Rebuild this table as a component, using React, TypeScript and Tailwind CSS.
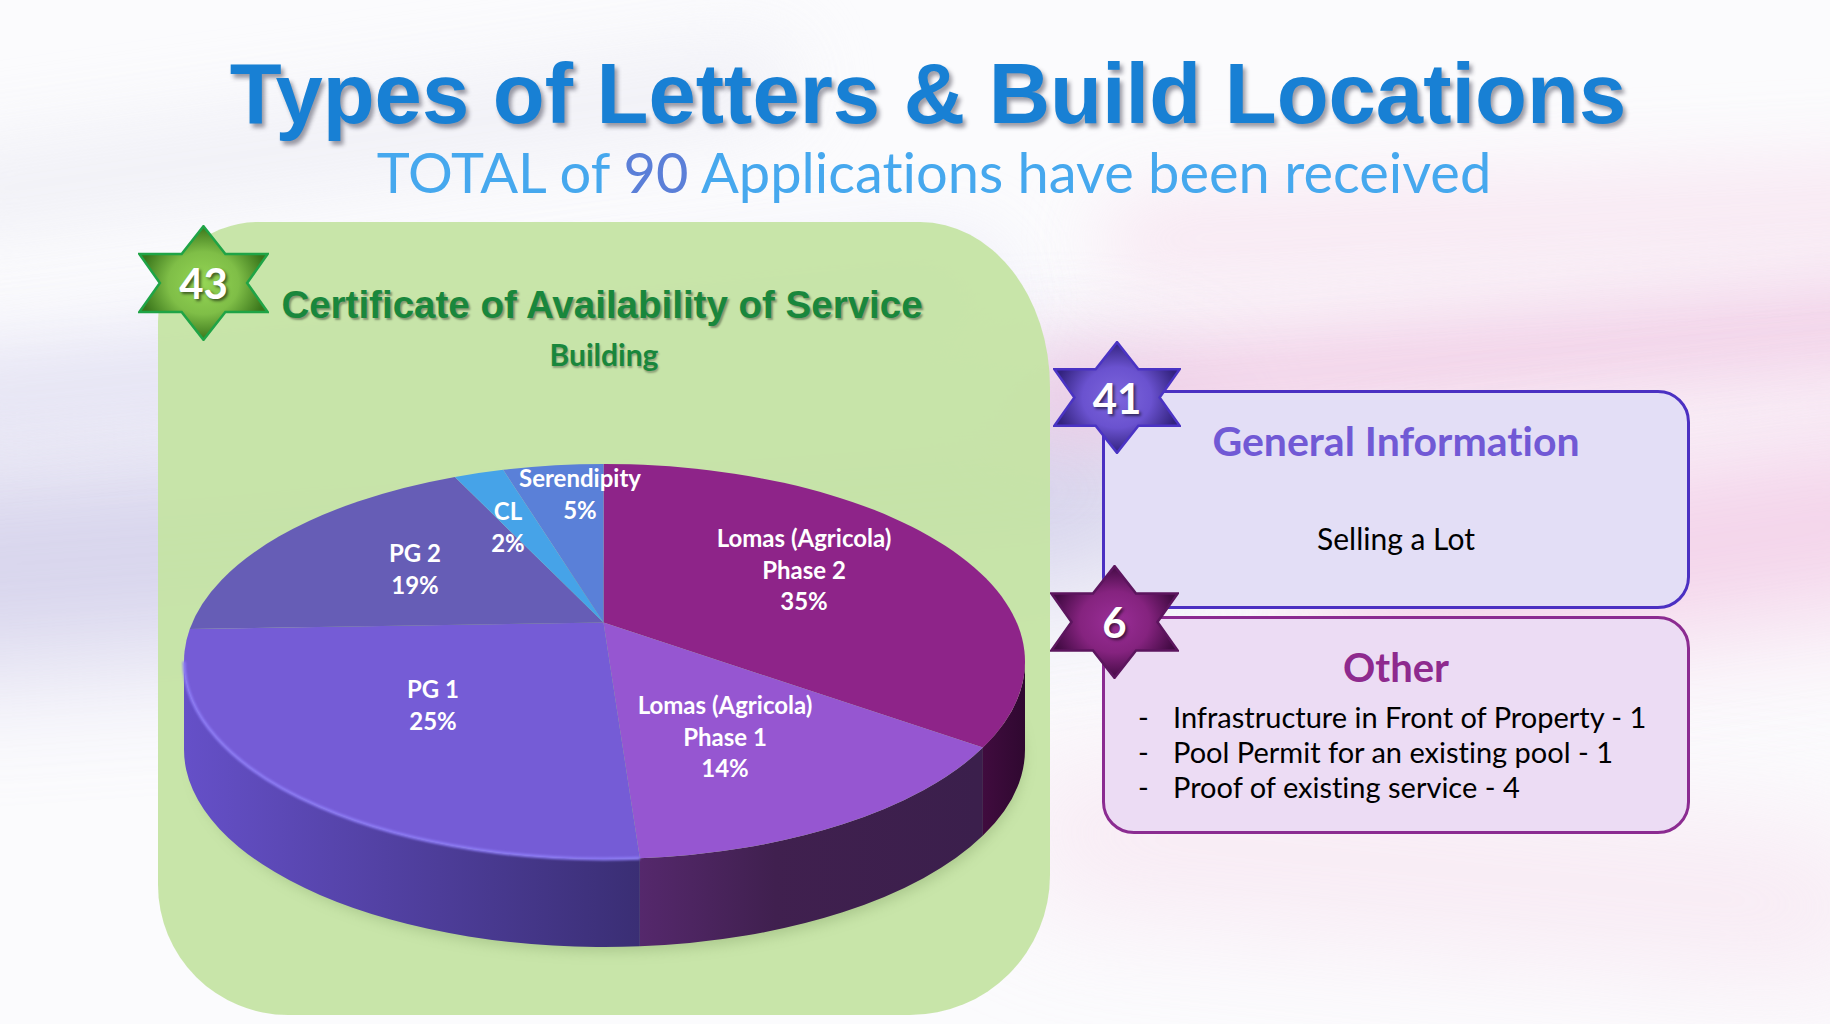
import React from 'react';

// pie geometry, in page pixels (the svg viewBox uses page coordinates)
const cx = 604.5;
const cy = 660.5;
const rx = 420.5;
const ry = 197.5;
const ax = 603.5;
const ay = 621.5;
const depth = 88;

type Pt = { x: number; y: number; t: number };

const at = (t: number): Pt => ({ x: cx + rx * Math.cos(t), y: cy + ry * Math.sin(t), t });

// ray from the apex towards (tx, ty), cut with the top ellipse
const hit = (tx: number, ty: number): Pt => {
  const dx = tx - ax;
  const dy = ty - ay;
  const ox = (ax - cx) / rx;
  const oy = (ay - cy) / ry;
  const ux = dx / rx;
  const uy = dy / ry;
  const a = ux * ux + uy * uy;
  const b = 2 * (ox * ux + oy * uy);
  const c = ox * ox + oy * oy - 1;
  const s = (-b + Math.sqrt(b * b - 4 * a * c)) / (2 * a);
  const x = ax + s * dx;
  const y = ay + s * dy;
  return { x, y, t: Math.atan2((y - cy) / ry, (x - cx) / rx) };
};

const B0 = hit(603.5, 463);
const B1 = hit(978, 745);
const B2 = hit(640, 858);
const B3 = hit(187, 628);
const B4 = hit(455, 476);
const B5 = hit(502, 467);

const slice = (p1: Pt, p2: Pt) =>
  `M ${ax} ${ay} L ${p1.x} ${p1.y} A ${rx} ${ry} 0 0 1 ${p2.x} ${p2.y} Z`;

const side = (t1: number, t2: number) => {
  const p1 = at(t1);
  const p2 = at(t2);
  return `M ${p1.x} ${p1.y} A ${rx} ${ry} 0 0 1 ${p2.x} ${p2.y} L ${p2.x} ${p2.y + depth} A ${rx} ${ry} 0 0 0 ${p1.x} ${p1.y + depth} Z`;
};

const slices = [
  { from: B0, to: B1, fill: '#8e2489' },
  { from: B1, to: B2, fill: '#9656d1' },
  { from: B2, to: B3, fill: '#755cd6' },
  { from: B3, to: B4, fill: '#665db6' },
  { from: B4, to: B5, fill: '#46a3e8' },
  { from: B5, to: B0, fill: '#5a80d8' },
];

const labels = [
  { x: 580, lines: ['Serendipity', '5%'], y: 486 },
  { x: 508, lines: ['CL', '2%'], y: 519 },
  { x: 415, lines: ['PG 2', '19%'], y: 561 },
  { x: 804, lines: ['Lomas (Agricola)', 'Phase 2', '35%'], y: 546 },
  { x: 433, lines: ['PG 1', '25%'], y: 697 },
  { x: 725, lines: ['Lomas (Agricola)', 'Phase 1', '14%'], y: 713 },
];

const otherItems = [
  'Infrastructure in Front of Property - 1',
  'Pool Permit for an existing pool - 1',
  'Proof of existing service - 4',
];

const starPoints = '50,1 66.7,25 99,25 83.3,50 99,75 66.7,75 50,99 33.3,75 1,75 16.7,50 1,25 33.3,25';

type StarProps = {
  id: string;
  label: string;
  inner: string;
  mid: string;
  edge: string;
  stroke: string;
  className: string;
};

const Star = ({ id, label, inner, mid, edge, stroke, className }: StarProps) => (
  <div className={`absolute flex items-center justify-center ${className}`}>
    <svg className="absolute inset-0 h-full w-full" viewBox="0 0 100 100" preserveAspectRatio="none">
      <defs>
        <radialGradient id={id} cx="50%" cy="50%" r="50%">
          <stop offset="0%" stopColor={inner} />
          <stop offset="55%" stopColor={mid} />
          <stop offset="100%" stopColor={edge} />
        </radialGradient>
      </defs>
      <polygon
        points={starPoints}
        fill={`url(#${id})`}
        stroke={stroke}
        strokeWidth="2.5"
        vectorEffect="non-scaling-stroke"
        strokeLinejoin="miter"
      />
    </svg>
    <span className="relative font-['Lato',sans-serif] text-[42px] font-bold leading-none text-white [text-shadow:2px_2px_3px_rgba(0,0,0,0.55)]">
      {label}
    </span>
  </div>
);

const PieChart = () => (
  <svg className="block" width="892" height="560" viewBox="158 420 892 560">
    <defs>
      <linearGradient id="pg1Side" gradientUnits="userSpaceOnUse" x1="184" y1="0" x2="640" y2="0">
        <stop offset="0%" stopColor="#6550c8" />
        <stop offset="100%" stopColor="#3a2e74" />
      </linearGradient>
      <linearGradient id="ph1Side" gradientUnits="userSpaceOnUse" x1="640" y1="0" x2="978" y2="0">
        <stop offset="0%" stopColor="#55286c" />
        <stop offset="40%" stopColor="#40204f" />
        <stop offset="100%" stopColor="#3b1f4c" />
      </linearGradient>
      <linearGradient id="ph2Side" gradientUnits="userSpaceOnUse" x1="978" y1="0" x2="1025" y2="0">
        <stop offset="0%" stopColor="#420c40" />
        <stop offset="100%" stopColor="#2f0830" />
      </linearGradient>
      <filter id="pieShadow" x="-10%" y="-10%" width="120%" height="130%">
        <feGaussianBlur stdDeviation="7" />
      </filter>
      <filter id="soft" x="-5%" y="-5%" width="110%" height="110%">
        <feGaussianBlur stdDeviation="1.2" />
      </filter>
    </defs>

    {/* shadow under the pie */}
    <ellipse cx={cx + 4} cy={cy + depth + 8} rx={rx - 6} ry={ry - 4} fill="#6f8f55" opacity="0.35" filter="url(#pieShadow)" />

    {/* sides */}
    <path d={side(B2.t, Math.PI)} fill="url(#pg1Side)" />
    <path d={side(B1.t, B2.t)} fill="url(#ph1Side)" />
    <path d={side(0, B1.t)} fill="url(#ph2Side)" />

    {/* top */}
    {slices.map((s, i) => (
      <path key={i} d={slice(s.from, s.to)} fill={s.fill} />
    ))}

    {/* light rim on the front edge of PG 1 */}
    <path
      d={`M ${at(Math.PI).x} ${at(Math.PI).y} A ${rx} ${ry} 0 0 0 ${B2.x} ${B2.y}`}
      fill="none"
      stroke="#8d7cf6"
      strokeWidth="3"
      filter="url(#soft)"
    />

    {labels.map((l, i) => (
      <text
        key={i}
        x={l.x}
        y={l.y}
        textAnchor="middle"
        fill="#ffffff"
        fontFamily="Lato, sans-serif"
        fontWeight="700"
        fontSize="24"
      >
        {l.lines.map((line, j) => (
          <tspan key={j} x={l.x} dy={j === 0 ? 0 : 31.5}>
            {line}
          </tspan>
        ))}
      </text>
    ))}
  </svg>
);

const Background = () => (
  <div className="pointer-events-none absolute inset-0 overflow-hidden">
    <div className="absolute left-[-200px] top-[430px] h-[200px] w-[1400px] rotate-[-4deg] rounded-full bg-[#c9c5e6] opacity-75 blur-3xl" />
    <div className="absolute left-[-100px] top-[300px] h-[90px] w-[1100px] rotate-[-6deg] rounded-full bg-[#dcdaf0] opacity-70 blur-2xl" />
    <div className="absolute left-[1000px] top-[310px] h-[90px] w-[1000px] rotate-[-5deg] rounded-full bg-[#eebfdf] opacity-75 blur-2xl" />
    <div className="absolute left-[1300px] top-[470px] h-[160px] w-[700px] rotate-[-8deg] rounded-full bg-[#f0bfe0] opacity-75 blur-3xl" />
    <div className="absolute left-[1100px] top-[180px] h-[80px] w-[900px] rotate-[-3deg] rounded-full bg-[#f6dcec] opacity-70 blur-2xl" />
    <div className="absolute left-[1000px] top-[800px] h-[140px] w-[900px] rotate-[6deg] rounded-full bg-[#f5dcec] opacity-60 blur-3xl" />
    <div className="absolute left-[-100px] top-[100px] h-[80px] w-[900px] rotate-[-8deg] rounded-full bg-[#ececf4] opacity-80 blur-2xl" />
  </div>
);

export default function App() {
  return (
    <div className="relative h-[1024px] w-[1830px] overflow-hidden bg-[#fbfbfd] [font-variant-ligatures:none]">
      <Background />

      <div className="relative flex flex-col items-center pt-[51px]">
        <h1 className="ml-[26px] font-['Liberation_Sans',Arial,sans-serif] text-[85px] font-bold leading-none text-[#1880d4] [text-shadow:3px_4px_4px_rgba(40,40,60,0.45)]">
          Types of Letters &amp; Build Locations
        </h1>
        <p className="ml-[38px] mt-[8px] font-['Lato',sans-serif] text-[56px] leading-none text-[#46a8ee]">
          TOTAL of <span className="text-[#5b7fd8]">90</span> Applications have been received
        </p>
      </div>

      <div className="relative mt-[22px] flex items-start">
        {/* left: building certificates */}
        <div className="relative ml-[158px] flex h-[793px] w-[892px] flex-col items-center rounded-tl-[100px] rounded-tr-[130px_165px] rounded-bl-[130px] rounded-br-[140px] bg-[#c5e4a4]/95 pt-[64px]">
          <Star
            id="g43"
            label="43"
            inner="#95d655"
            mid="#7fbe47"
            edge="#3a761b"
            stroke="#1fa446"
            className="left-[-20px] top-[3px] h-[116px] w-[131px]"
          />
          <h2 className="mr-[4px] font-['Liberation_Sans',Arial,sans-serif] text-[38.5px] font-bold leading-none text-[#19873c] [text-shadow:2px_2px_2px_rgba(0,0,0,0.35)]">
            Certificate of Availability of Service
          </h2>
          <p className="mt-[14px] font-['Lato',sans-serif] text-[30px] font-bold leading-none text-[#19873c] [text-shadow:1px_2px_2px_rgba(0,0,0,0.3)]">
            Building
          </p>
          <div className="mt-[52px]">
            <PieChart />
          </div>
        </div>

        {/* right: other letters */}
        <div className="ml-[52px] mt-[168px] flex w-[588px] flex-col gap-[7px]">
          <div className="relative h-[219px] rounded-[32px] rounded-tl-[18px] border-[3.5px] border-[#4b30c2] bg-[#e3def6] pt-[27px] text-center">
            <Star
              id="p41"
              label="41"
              inner="#7d66dd"
              mid="#6a52cf"
              edge="#33237f"
              stroke="#4a33c4"
              className="left-[-52px] top-[-52px] h-[113px] w-[128px]"
            />
            <h3 className="font-['Lato',sans-serif] text-[41px] font-bold leading-none text-[#7159d5]">General Information</h3>
            <p className="mt-[62px] font-['Lato',sans-serif] text-[30px] leading-none text-black">Selling a Lot</p>
          </div>

          <div className="relative h-[218px] rounded-[32px] rounded-tl-[18px] border-[3.5px] border-[#8b2b91] bg-[#ecdcf4] pt-[28px]">
            <Star
              id="m6"
              label="6"
              inner="#9a2e97"
              mid="#85237f"
              edge="#440b45"
              stroke="#5c155e"
              className="left-[-55px] top-[-54px] h-[114px] w-[129px]"
            />
            <h3 className="text-center font-['Lato',sans-serif] text-[40px] font-bold leading-none text-[#8e2a8e]">Other</h3>
            <ul className="mt-[12px] flex flex-col pl-[33px] font-['Lato',sans-serif] text-[29px] leading-[35px] text-black">
              {otherItems.map((item) => (
                <li key={item} className="flex">
                  <span className="w-[35px]">-</span>
                  <span>{item}</span>
                </li>
              ))}
            </ul>
          </div>
        </div>
      </div>
    </div>
  );
}
